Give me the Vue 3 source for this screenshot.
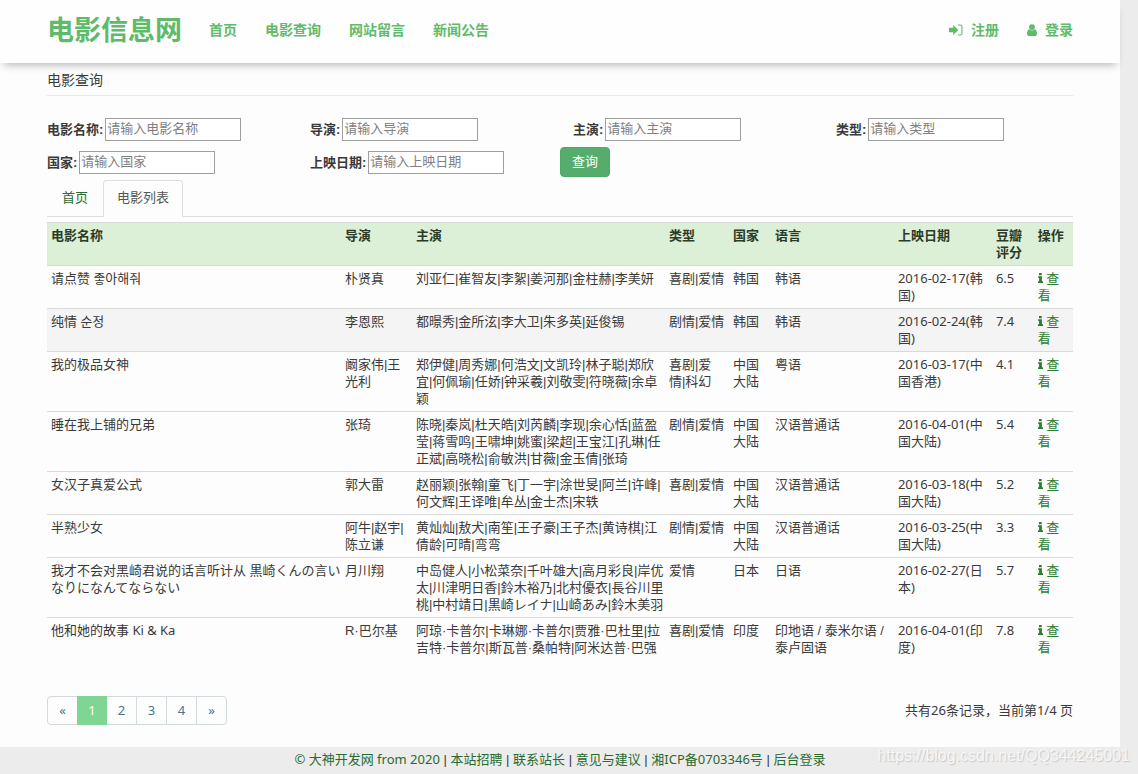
<script setup>
import { ref } from 'vue'

const navLinks = ['首页', '电影查询', '网站留言', '新闻公告']

const fields = [
  { id: 'name', label: '电影名称' },
  { id: 'director', label: '导演' },
  { id: 'actor', label: '主演' },
  { id: 'type', label: '类型' },
  { id: 'country', label: '国家' },
  { id: 'release', label: '上映日期' }
]
const query = ref({ name: '', director: '', actor: '', type: '', country: '', release: '' })

const columns = [
  { key: 'name', title: '电影名称' },
  { key: 'director', title: '导演' },
  { key: 'actors', title: '主演' },
  { key: 'type', title: '类型' },
  { key: 'country', title: '国家' },
  { key: 'lang', title: '语言' },
  { key: 'date', title: '上映日期' },
  { key: 'score', title: '豆瓣评分' },
  { key: 'ops', title: '操作' }
]

const movies = [
  { name: '请点赞 좋아해줘', director: '朴贤真', actors: '刘亚仁|崔智友|李絮|姜河那|金柱赫|李美妍', type: '喜剧|爱情', country: '韩国', lang: '韩语', date: '2016-02-17(韩国)', score: '6.5' },
  { name: '纯情 순정', director: '李恩熙', actors: '都暻秀|金所泫|李大卫|朱多英|延俊锡', type: '剧情|爱情', country: '韩国', lang: '韩语', date: '2016-02-24(韩国)', score: '7.4', hover: true },
  { name: '我的极品女神', director: '阚家伟|王光利', actors: '郑伊健|周秀娜|何浩文|文凯玲|林子聪|郑欣宜|何佩瑜|任娇|钟采羲|刘敬雯|符晓薇|余卓颖', type: '喜剧|爱情|科幻', country: '中国大陆', lang: '粤语', date: '2016-03-17(中国香港)', score: '4.1' },
  { name: '睡在我上铺的兄弟', director: '张琦', actors: '陈晓|秦岚|杜天皓|刘芮麟|李现|余心恬|蓝盈莹|蒋雪鸣|王啸坤|姚蜜|梁超|王宝江|孔琳|任正斌|高晓松|俞敏洪|甘薇|金玉倩|张琦', type: '剧情|爱情', country: '中国大陆', lang: '汉语普通话', date: '2016-04-01(中国大陆)', score: '5.4' },
  { name: '女汉子真爱公式', director: '郭大雷', actors: '赵丽颖|张翰|童飞|丁一宇|涂世旻|阿兰|许峰|何文辉|王译唯|牟丛|金士杰|宋轶', type: '喜剧|爱情', country: '中国大陆', lang: '汉语普通话', date: '2016-03-18(中国大陆)', score: '5.2' },
  { name: '半熟少女', director: '阿牛|赵宇|陈立谦', actors: '黄灿灿|敖犬|南笙|王子豪|王子杰|黄诗棋|江倩龄|可晴|弯弯', type: '剧情|爱情', country: '中国大陆', lang: '汉语普通话', date: '2016-03-25(中国大陆)', score: '3.3' },
  { name: '我才不会对黑崎君说的话言听计从 黒崎くんの言いなりになんてならない', director: '月川翔', actors: '中岛健人|小松菜奈|千叶雄大|高月彩良|岸优太|川津明日香|鈴木裕乃|北村優衣|長谷川里桃|中村靖日|黒崎レイナ|山崎あみ|鈴木美羽', type: '爱情', country: '日本', lang: '日语', date: '2016-02-27(日本)', score: '5.7' },
  { name: '他和她的故事 Ki & Ka', director: 'R·巴尔基', actors: '阿琼·卡普尔|卡琳娜·卡普尔|贾雅·巴杜里|拉吉特·卡普尔|斯瓦普·桑帕特|阿米达普·巴强', type: '喜剧|爱情', country: '印度', lang: '印地语 / 泰米尔语 / 泰卢固语', date: '2016-04-01(印度)', score: '7.8' }
]
const dataColumns = columns.slice(0, -1)

const pages = ['«', '1', '2', '3', '4', '»']
const footerLinks = ['本站招聘', '联系站长', '意见与建议', '湘ICP备0703346号', '后台登录']
</script>

<template>
  <div class="page">
    <div class="sheet">
      <header class="topbar">
        <a class="brand" href="#">电影信息网</a>
        <nav class="nav">
          <a v-for="n in navLinks" :key="n" href="#">{{ n }}</a>
        </nav>
        <div class="account">
          <a href="#">
            <svg class="icon-in" viewBox="0 0 14 12" aria-hidden="true">
              <path d="M0 3.800h4.200V1l5.200 5-5.200 5V8.200H0z" fill="currentColor" />
              <path d="M9 1h2.200a1.800 1.800 0 0 1 1.800 1.800v6.400a1.800 1.800 0 0 1-1.800 1.800H9" fill="none" stroke="currentColor" stroke-width="1.100" />
            </svg>注册</a>
          <a href="#">
            <svg class="icon-user" viewBox="0 0 10 12" aria-hidden="true">
              <circle cx="5" cy="3.100" r="2.900" fill="currentColor" />
              <path d="M2.300 5.200C.7 5.500 0 7.200 0 9.400 0 11 .9 12 2.200 12h5.600C9.100 12 10 11 10 9.400c0-2.200-.7-3.900-2.300-4.200a4 4 0 0 1-5.400 0z" fill="currentColor" />
            </svg>登录</a>
        </div>
      </header>

      <main class="content">
        <h1 class="title">电影查询</h1>

        <form class="search" @submit.prevent>
          <div v-for="f in fields" :key="f.id" class="field">
            <label :for="f.id">{{ f.label }}:</label>
            <input :id="f.id" v-model="query[f.id]" type="text" :placeholder="'请输入' + f.label" />
          </div>
          <div class="action"><button type="submit">查询</button></div>
        </form>

        <nav class="tabs">
          <a href="#">首页</a>
          <a href="#" class="active">电影列表</a>
        </nav>

        <table class="movies">
          <colgroup>
            <col v-for="c in columns" :key="c.key" :class="'w-' + c.key" />
          </colgroup>
          <thead>
            <tr>
              <th v-for="c in columns" :key="c.key" scope="col">{{ c.title }}</th>
            </tr>
          </thead>
          <tbody>
            <tr v-for="m in movies" :key="m.name" :class="{ hover: m.hover }">
              <td v-for="c in dataColumns" :key="c.key" :class="c.key">{{ m[c.key] }}</td>
              <td class="ops">
                <a href="#"><svg class="icon-info" viewBox="0 0 5 10" aria-hidden="true">
                  <path d="M1 0h2.700v2.300H1zM.2 3.300h3.700v4.900H5V10H0V8.200h1.100V5.100H.2z" fill="currentColor" />
                </svg> 查看</a>
              </td>
            </tr>
          </tbody>
        </table>

        <div class="pager">
          <nav class="pages">
            <a v-for="p in pages" :key="p" href="#" :class="{ current: p === '1' }">{{ p }}</a>
          </nav>
          <span>共有26条记录，当前第1/4 页</span>
        </div>
      </main>
    </div>

    <footer class="footer">
      <p>
        <a href="#">© 大神开发网 from 2020</a>
        <template v-for="l in footerLinks" :key="l"> | <a href="#">{{ l }}</a></template>
      </p>
      <span class="watermark">https://blog.csdn.net/QQ344245001</span>
    </footer>
  </div>
</template>

<style>
body {
  margin: 0;
  background: #ececec;
}
</style>

<style scoped>
.page {
  display: flex;
  flex-direction: column;
  min-height: 100vh;
  font: 13px/17px "Noto Sans", "Noto Sans CJK SC", "Noto Sans CJK KR", sans-serif;
  color: #3a3a3a;
}
.page * {
  box-sizing: border-box;
}
a {
  text-decoration: none;
  color: #2a6a2e;
}
.sheet {
  flex: 1;
  margin-right: 18px;
  background: #fdfdfd;
}
.topbar {
  display: flex;
  align-items: center;
  height: 63px;
  padding: 0 47px 3px;
  background: #fefefe;
  box-shadow: 0 6px 8px -4px rgba(0, 0, 0, 0.28);
}
.topbar a {
  color: #5fbb6a;
  font-weight: 700;
}
.topbar .brand {
  font-size: 27px;
  line-height: 36px;
}
.nav,
.account {
  display: flex;
  gap: 28px;
  font-size: 14px;
  line-height: 20px;
}
.nav {
  margin-left: 27px;
}
.account {
  margin-left: auto;
}
.account a {
  display: flex;
  align-items: center;
  gap: 8px;
}
.icon-in {
  width: 14px;
  height: 12px;
}
.icon-user {
  width: 10px;
  height: 12px;
}
.content {
  padding: 6px 47px 22px;
}
.title {
  margin: 0;
  padding-bottom: 5px;
  border-bottom: 1px solid #e8e8e8;
  font-size: 14px;
  line-height: 21px;
  font-weight: 400;
}
.search {
  display: grid;
  grid-template-columns: repeat(4, 1fr);
  row-gap: 3px;
  margin: 18px -13px 0;
}
.field {
  display: flex;
  align-items: center;
  height: 30px;
  gap: 2px;
  padding-left: 13px;
}
.field label {
  font-weight: 700;
  font-family: "Liberation Sans", "Noto Sans CJK SC", sans-serif;
}
.field input {
  width: 136px;
  height: 23px;
  padding: 0 1px 2px;
  border: 1px solid #9f9f9f;
  background: #fff;
  font: inherit;
  color: #333;
}
.field input::placeholder {
  color: #808080;
}
.action button {
  height: 30px;
  padding: 0 11px 2px;
  border: 1px solid #4fa768;
  border-radius: 4px;
  background: #55ac6c;
  color: #fff;
  font: inherit;
}
.tabs {
  display: flex;
  height: 37px;
  margin-top: 3px;
  border-bottom: 1px solid #ddd;
}
.tabs a {
  height: 37px;
  padding: 8px 14px;
  border: 1px solid transparent;
}
.tabs .active {
  padding: 8px 13px;
  border-color: #ddd #ddd #fdfdfd;
  border-radius: 4px 4px 0 0;
  background: #fdfdfd;
  color: #555;
}
.movies {
  width: 100%;
  margin-top: 5px;
  border-collapse: collapse;
  table-layout: fixed;
}
.w-name { width: 28.65%; }
.w-director { width: 6.92%; }
.w-actors { width: 24.66%; }
.w-type { width: 6.24%; }
.w-country { width: 4.09%; }
.w-lang { width: 11.99%; }
.w-date { width: 9.55%; }
.w-score { width: 4.09%; }
.w-ops { width: 3.81%; }
.movies th,
.movies td {
  padding: 4px 0 4px 4px;
  border-top: 1px solid #d9dbd9;
  text-align: left;
  vertical-align: top;
}
.movies th {
  background: #dcefd7;
  color: #2c3b28;
}
.movies .hover {
  background: #f4f4f4;
}
.movies .director,
.movies .actors,
.movies .type,
.movies .lang {
  font-family: "Liberation Sans", "Noto Sans CJK SC", sans-serif;
}
.movies .type {
  padding-right: 2px;
}
.movies .ops {
  padding-right: 4px;
}
.ops a {
  color: #2b7d31;
}
.icon-info {
  width: 5px;
  height: 10px;
}
.pager {
  display: flex;
  align-items: center;
  justify-content: space-between;
  margin-top: 36px;
}
.pages {
  display: flex;
  border: 1px solid #d3dadd;
  border-radius: 4px;
}
.pages a {
  width: 30px;
  height: 27px;
  border-right: 1px solid #d3dadd;
  line-height: 27px;
  text-align: center;
  color: #4b7489;
}
.pages a:first-child,
.pages a:last-child {
  width: 29px;
  border-right: 0;
}
.pages .current {
  height: 29px;
  margin: -1px 0;
  border-right: 0;
  background: #7fd594;
  line-height: 29px;
  color: #fff;
}
.footer {
  position: relative;
  padding: 4px 18px 6px 0;
  background: #ececec;
  text-align: center;
}
.footer p {
  margin: 0;
  font-family: "Liberation Sans", sans-serif;
}
.footer a {
  font-family: "Noto Sans", "Noto Sans CJK SC", sans-serif;
}
.watermark {
  position: absolute;
  right: 8px;
  bottom: 8px;
  font: 16px/20px "Liberation Sans", sans-serif;
  color: #f6f6f6;
  text-shadow: 1px 1px 1px #c8c8c8;
}
</style>
